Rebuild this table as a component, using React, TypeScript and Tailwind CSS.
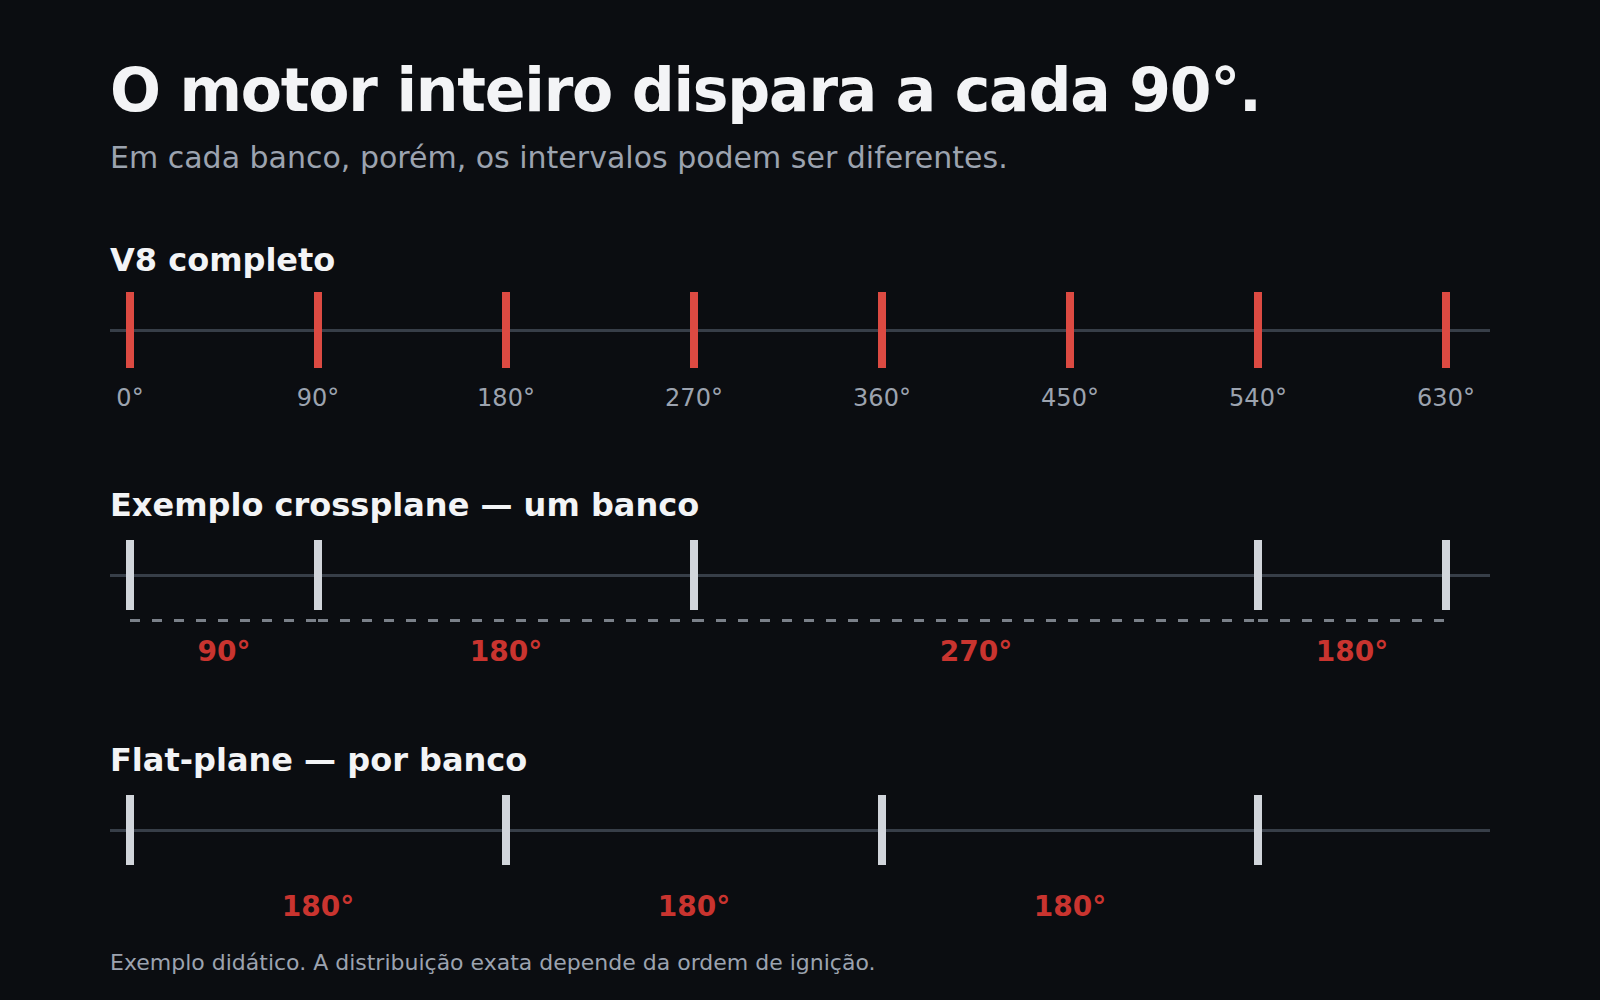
import React from "react";

// 188px per 90°, first firing 20px in from the start of the axis
const toX = (deg: number) => 20 + (deg * 188) / 90;

const fullTicks = [0, 90, 180, 270, 360, 450, 540, 630];
const crossTicks = [0, 90, 270, 540, 630];
const flatTicks = [0, 180, 360, 540];

const Axis = ({ ticks, red, dashed }: { ticks: number[]; red?: boolean; dashed?: boolean }) => (
  <svg width="1380" height="76" viewBox="0 0 1380 76" className="block overflow-visible">
    <line x1="0" y1="38.5" x2="1380" y2="38.5" stroke="#373e48" strokeWidth="3" />
    {ticks.map((t) =>
      red ? (
        <rect key={t} x={toX(t) - 4} y="0" width="8" height="76" fill="#dc4a42" />
      ) : (
        <rect key={t} x={toX(t) - 4} y="3" width="8" height="70" fill="#d1d5db" />
      )
    )}
    {dashed &&
      ticks.slice(1).map((t, i) => (
        <line
          key={t}
          x1={toX(ticks[i])}
          y1="83.5"
          x2={toX(t)}
          y2="83.5"
          stroke="#7a8089"
          strokeWidth="3"
          strokeDasharray="10 12"
        />
      ))}
  </svg>
);

const Heading = ({ children, className }: { children: React.ReactNode; className: string }) => (
  <h2 className={`text-[32px] font-bold leading-[32px] text-[#f3f4f6] ${className}`}>{children}</h2>
);

export default function App() {
  return (
    <div className="flex h-[1000px] w-full flex-col overflow-hidden bg-[#0b0d11] pl-[110px] pt-[60px] font-['DejaVu_Sans',sans-serif]">
      <h1 className="text-[60px] font-bold leading-[60px] tracking-[-0.02em] text-[#f3f4f6]">
        O motor inteiro dispara a cada 90°.
      </h1>
      <p className="mt-[23px] text-[30px] leading-[30px] text-[#9ca3af]">
        Em cada banco, porém, os intervalos podem ser diferentes.
      </p>

      {/* V8 completo */}
      <Heading className="mt-[71px]">V8 completo</Heading>
      <div className="mt-[16px]">
        <Axis ticks={fullTicks} red />
      </div>
      <div className="-ml-[74px] mt-[18px] flex text-[24px] leading-[24px] text-[#9ca3af]">
        {fullTicks.map((t) => (
          <span key={t} className="w-[188px] text-center">
            {t}°
          </span>
        ))}
      </div>

      {/* crossplane */}
      <Heading className="mt-[79px]">Exemplo crossplane — um banco</Heading>
      <div className="mt-[16px]">
        <Axis ticks={crossTicks} dashed />
      </div>
      <div className="ml-[20px] mt-[25px] flex text-[28px] font-bold leading-[28px] text-[#c9342f]">
        <span className="w-[188px] text-center">90°</span>
        <span className="w-[376px] text-center">180°</span>
        <span className="w-[564px] text-center">270°</span>
        <span className="w-[188px] text-center">180°</span>
      </div>

      {/* flat-plane */}
      <Heading className="mt-[78px]">Flat-plane — por banco</Heading>
      <div className="mt-[16px]">
        <Axis ticks={flatTicks} />
      </div>
      <div className="ml-[20px] mt-[25px] flex text-[28px] font-bold leading-[28px] text-[#c9342f]">
        <span className="w-[376px] text-center">180°</span>
        <span className="w-[376px] text-center">180°</span>
        <span className="w-[376px] text-center">180°</span>
      </div>

      <p className="mt-[31px] text-[22px] leading-[22px] text-[#9ca3af]">
        Exemplo didático. A distribuição exata depende da ordem de ignição.
      </p>
    </div>
  );
}
